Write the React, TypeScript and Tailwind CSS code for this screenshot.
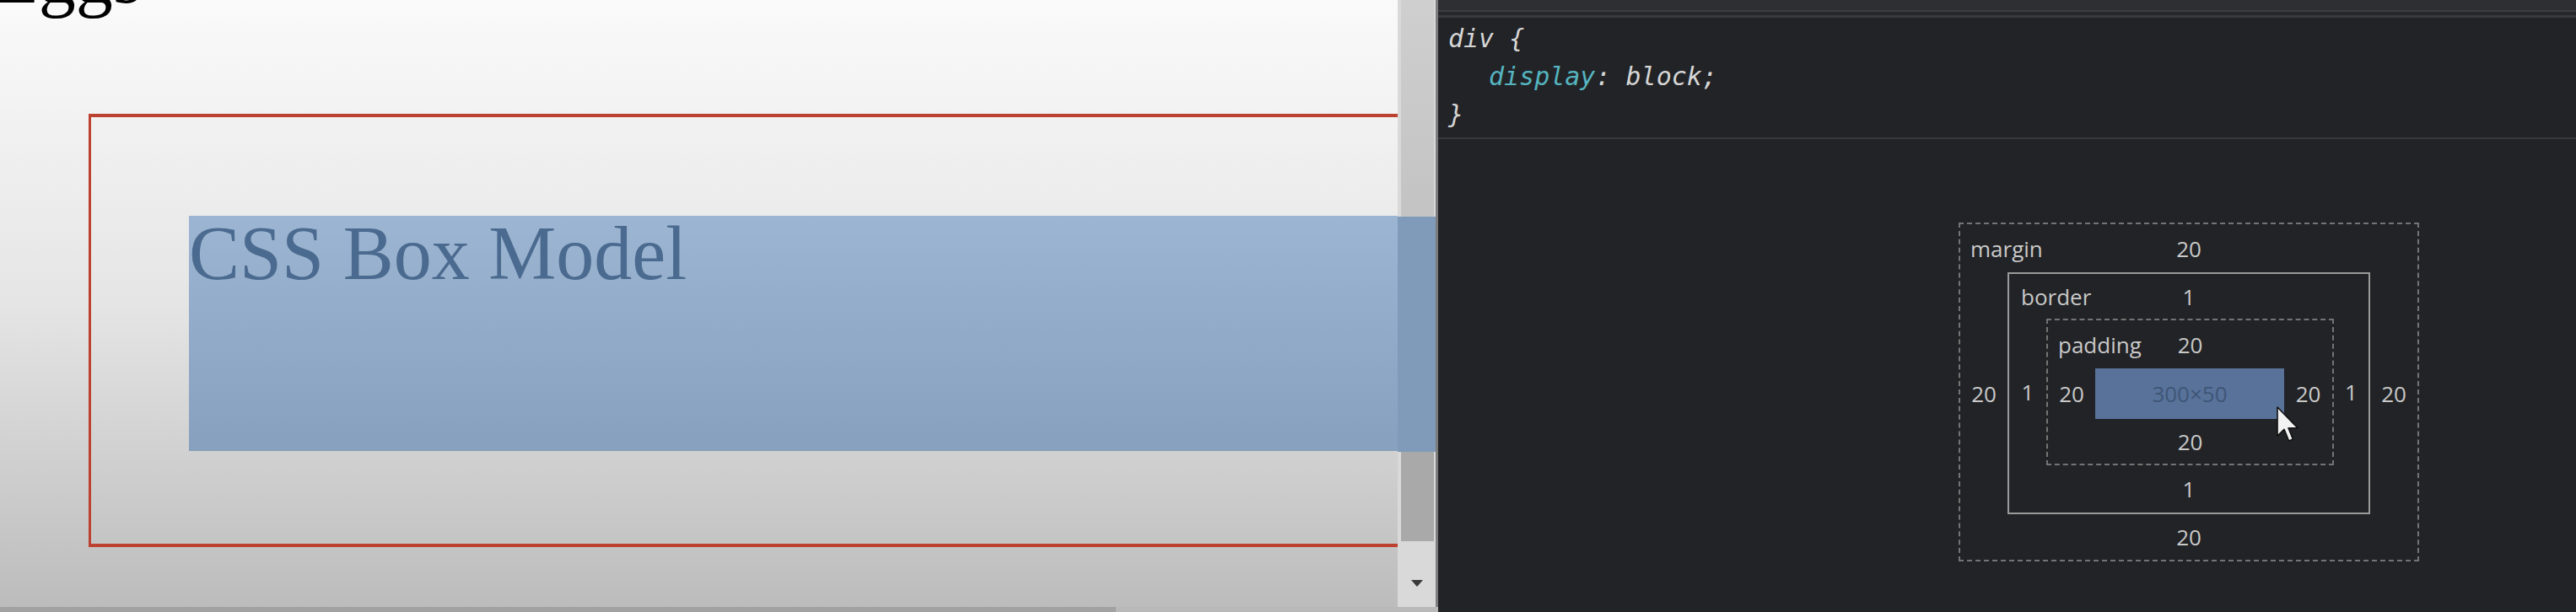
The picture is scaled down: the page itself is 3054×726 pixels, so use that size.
import React from "react";

// page being inspected (left) + devtools styles pane with box model (right)

function PageView() {
  return (
    <div className="w-[1705px] h-[726px] flex flex-col shrink-0">
      <div className="h-[720px] flex">
        {/* page viewport */}
        <div className="w-[1657px] h-[720px] overflow-hidden bg-linear-to-b from-[#fafafa] via-[#e5e5e5] to-[#bcbcbc] font-['Liberation_Serif',serif]">
          <div className="-mt-[70px] -ml-[8px] text-[88px] leading-none text-black whitespace-nowrap">
            Eggs
          </div>
          <div className="ml-[105px] mt-[117px] h-[514px] w-[1700px] border-x-[3px] border-y-[4px] border-[#bd4131]">
            <div className="ml-[116px] mt-[117px] h-[279px] bg-linear-to-b from-[#9cb5d2] to-[#87a0bd] text-[90px] leading-none text-[#4b6a8f] whitespace-nowrap">
              CSS Box Model
            </div>
          </div>
        </div>

        {/* vertical scrollbar */}
        <div className="w-[45px] flex flex-col bg-[#d9d9d9]">
          <div className="h-[257px] ml-[4px] mr-[2px] bg-linear-to-b from-[#cfcfcf] to-[#c3c3c3]" />
          <div className="h-[279px] bg-[#809ab9]" />
          <div className="h-[106px] ml-[4px] mr-[2px] bg-[#a9a9a9]" />
          <div className="flex justify-center mt-[46px]">
            <svg width="14" height="8" viewBox="0 0 14 8">
              <path d="M0 0 H14 L7 8 Z" fill="#3a3a3a" />
            </svg>
          </div>
        </div>
        <div className="w-[3px] bg-[#7c7c7c]" />
      </div>

      {/* horizontal scrollbar */}
      <div className="h-[6px] flex bg-[#b9b9b9]">
        <div className="w-[1323px] bg-[#a2a2a2]" />
      </div>
    </div>
  );
}

function Side({ w, children }: { w: string; children: React.ReactNode }) {
  return <div className={`${w} flex items-center justify-center`}>{children}</div>;
}

function BoxModel() {
  return (
    <div className="ml-[617px] mt-[99px] w-[546px] h-[402px] border-2 border-dashed border-[#747474] flex flex-col text-[26px] leading-none text-[#c9c9c9] font-['Open_Sans',sans-serif]">
      {/* margin */}
      <div className="h-[57px] grid grid-cols-[1fr_auto_1fr] items-center">
        <span className="pl-[12px]">margin</span>
        <span>20</span>
        <span />
      </div>
      <div className="flex">
        <Side w="w-[56px]">20</Side>
        <div className="w-[430px] h-[287px] border-2 border-[#9a9a9a] flex flex-col">
          {/* border */}
          <div className="h-[53px] grid grid-cols-[1fr_auto_1fr] items-center">
            <span className="pl-[14px]">border</span>
            <span>1</span>
            <span />
          </div>
          <div className="flex">
            <Side w="w-[44px]">1</Side>
            <div className="w-[341px] h-[174px] border-2 border-dashed border-[#747474] flex flex-col">
              {/* padding */}
              <div className="h-[57px] grid grid-cols-[1fr_auto_1fr] items-center">
                <span className="pl-[12px]">padding</span>
                <span>20</span>
                <span />
              </div>
              <div className="flex">
                <Side w="w-[56px]">20</Side>
                <div className="relative w-[224px] h-[60px] bg-[#58729a] flex items-center justify-center text-[#3f5677]">
                  300×50
                  <svg
                    className="absolute left-[214px] top-[44px]"
                    width="28"
                    height="46"
                    viewBox="-1 -1 14 23"
                  >
                    <path
                      d="M0 0 L0 17 L4 13.2 L6.8 20 L9.2 19 L6.5 12.4 L12 12.4 Z"
                      fill="#f2f2f2"
                      stroke="#111"
                      strokeWidth="0.8"
                      strokeLinejoin="round"
                    />
                  </svg>
                </div>
                <Side w="w-[57px]">20</Side>
              </div>
              <div className="flex-1 flex items-center justify-center">20</div>
            </div>
            <Side w="w-[41px]">1</Side>
          </div>
          <div className="flex-1 flex items-center justify-center">1</div>
        </div>
        <Side w="w-[56px]">20</Side>
      </div>
      <div className="flex-1 flex items-center justify-center">20</div>
    </div>
  );
}

function StylesPane() {
  return (
    <div className="flex-1 h-[726px] bg-[#222326] flex flex-col">
      <div className="h-[12px] bg-[#2e2f32]" />
      <div className="h-[2px] bg-[#3d3e41]" />
      <div className="h-[4px] bg-[#27282b]" />
      <div className="h-[3px] bg-[#393a3d]" />

      <div className="pt-[2px] pl-[12px] font-['DejaVu_Sans_Mono',monospace] italic text-[30px] leading-[45px] text-[#d6d6d6]">
        <div>div {"{"}</div>
        <div className="pl-[48px]">
          <span className="text-[#55b4bf]">display</span>: block;
        </div>
        <div>{"}"}</div>
      </div>
      <div className="mt-[5px] h-[2px] bg-[#37383b]" />

      <BoxModel />
    </div>
  );
}

export default function App() {
  return (
    <div className="w-[3054px] h-[726px] flex overflow-hidden">
      <PageView />
      <StylesPane />
    </div>
  );
}
